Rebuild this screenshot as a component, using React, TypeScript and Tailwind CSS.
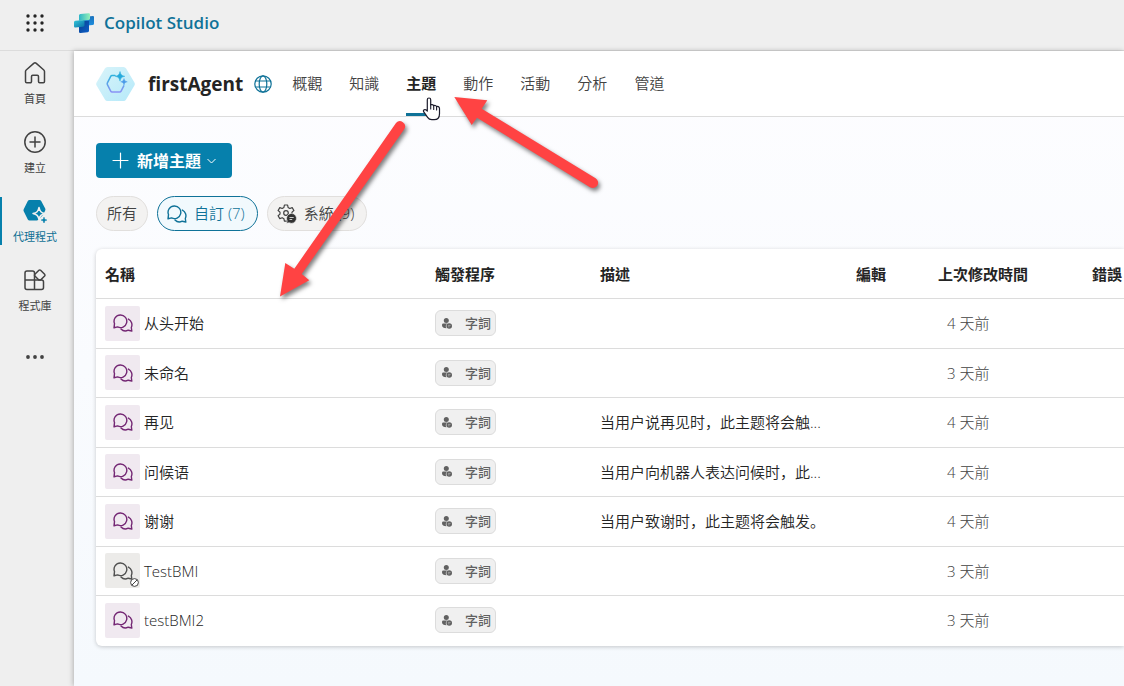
import type { ReactNode } from "react";

type Topic = {
  name: string;
  description?: string;
  modified: string;
  disabled?: boolean;
};

const topics: Topic[] = [
  { name: "从头开始", modified: "4 天前" },
  { name: "未命名", modified: "3 天前" },
  { name: "再见", description: "当用户说再见时，此主题将会触...", modified: "4 天前" },
  { name: "问候语", description: "当用户向机器人表达问候时，此...", modified: "4 天前" },
  { name: "谢谢", description: "当用户致谢时，此主题将会触发。", modified: "4 天前" },
  { name: "TestBMI", modified: "3 天前", disabled: true },
  { name: "testBMI2", modified: "3 天前" },
];

const tabs = ["概觀", "知識", "主題", "動作", "活動", "分析", "管道"];

function WaffleIcon() {
  return (
    <svg width="18" height="18" viewBox="0 0 18 18" fill="#242424">
      {[2, 9, 16].map(y => [2, 9, 16].map(x => <circle key={`${x}-${y}`} cx={x} cy={y} r="1.7" />))}
    </svg>
  );
}

function CopilotStudioLogo() {
  return (
    <svg width="20" height="20" viewBox="0 0 20 20">
      <defs>
        <linearGradient id="logoTop" x1="0" y1="0" x2="1" y2="0">
          <stop offset="0" stopColor="#2cb4c8" />
          <stop offset="1" stopColor="#93f0b8" />
        </linearGradient>
        <linearGradient id="logoRight" x1="0" y1="0" x2="0" y2="1">
          <stop offset="0" stopColor="#1a72bd" />
          <stop offset="1" stopColor="#1d8fe0" />
        </linearGradient>
        <linearGradient id="logoLeft" x1="0" y1="0" x2="1" y2="1">
          <stop offset="0" stopColor="#35c8d8" />
          <stop offset="1" stopColor="#0a6fa8" />
        </linearGradient>
        <linearGradient id="logoBottom" x1="0" y1="0" x2="1" y2="1">
          <stop offset="0" stopColor="#0a3f8f" />
          <stop offset="1" stopColor="#0b5fc8" />
        </linearGradient>
      </defs>
      <path d="M9 4l10-1a1 1 0 0 1 1 1v6.500a1.500 1.500 0 0 1-1.500 1.500L9 13z" fill="url(#logoRight)" />
      <path d="M5 8h10v9.700a1.500 1.500 0 0 1-1.300 1.500l-7.200.800A1.300 1.300 0 0 1 5 18.700z" fill="url(#logoBottom)" />
      <path d="M0 9.200a1.500 1.500 0 0 1 1.400-1.500L10.500 7v5.200a1.500 1.500 0 0 1-1.400 1.500l-7.800.800A1.200 1.200 0 0 1 0 13.300z" fill="url(#logoLeft)" />
      <path d="M5 2.500A1.500 1.500 0 0 1 6.400 1L14.500.200A1.300 1.300 0 0 1 16 1.500v4a1.500 1.500 0 0 1-1.400 1.500L5 7.800z" fill="url(#logoTop)" />
    </svg>
  );
}

function HomeIcon() {
  return (
    <svg width="22" height="22" viewBox="0 0 22 22" fill="none" stroke="#424242" strokeWidth="1.500" strokeLinejoin="round">
      <path d="M1.500 9.500a2 2 0 0 1 .7-1.500l7.500-6.600a2 2 0 0 1 2.600 0L19.800 8a2 2 0 0 1 .7 1.500v10a1.200 1.200 0 0 1-1.200 1.200h-3.600a1.200 1.200 0 0 1-1.200-1.200v-5a1.200 1.200 0 0 0-1.200-1.200H8.700a1.200 1.200 0 0 0-1.200 1.200v5a1.200 1.200 0 0 1-1.200 1.200H2.700a1.200 1.200 0 0 1-1.200-1.200z" />
    </svg>
  );
}

function CreateIcon() {
  return (
    <svg width="22" height="22" viewBox="0 0 22 22" fill="none" stroke="#424242" strokeWidth="1.500" strokeLinecap="round">
      <circle cx="11" cy="11" r="10.200" />
      <path d="M11 6v10M6 11h10" />
    </svg>
  );
}

function AgentIcon() {
  return (
    <svg width="24" height="24" viewBox="0 0 24 24">
      <path d="M6.500 1h10a2 2 0 0 1 1.700 1l4 7.500a2 2 0 0 1 0 1.900L18 20.500a2 2 0 0 1-1.500 1h-10a2 2 0 0 1-1.700-1L.700 12.200a2 2 0 0 1 0-1.900L4.800 2a2 2 0 0 1 1.700-1z" fill="#0680ac" />
      <path d="M14 22l9-9v11h-9z" fill="#efefef" />
      <path d="M16 8.500c.900 4 2.100 5.200 6 6-3.900.900-5.100 2.100-6 6-.900-3.900-2.100-5.100-6-6 3.900-.800 5.100-2 6-6z" fill="#0680ac" stroke="#efefef" strokeWidth="1.500" strokeLinejoin="round" />
      <path d="M21 18.200c.4 1.900 1 2.500 2.900 2.900-1.900.4-2.500 1-2.900 2.900-.4-1.900-1-2.500-2.900-2.900 1.900-.4 2.500-1 2.900-2.900z" fill="#0680ac" stroke="#0680ac" strokeWidth=".6" />
    </svg>
  );
}

function LibraryIcon() {
  return (
    <svg width="22" height="22" viewBox="0 0 22 22" fill="none" stroke="#424242" strokeWidth="1.500" strokeLinejoin="round">
      <path d="M10.500 11V4a2 2 0 0 0-2-2H3a2 2 0 0 0-2 2v14.500a2 2 0 0 0 2 2h14.500a2 2 0 0 0 2-2V13a2 2 0 0 0-2-2zM1 11h9.500v9.500" />
      <path d="M14.900 1.300a1.200 1.200 0 0 1 1.700 0l4 4a1.200 1.200 0 0 1 0 1.700l-4 4h-1.700l-4-4a1.200 1.200 0 0 1 0-1.700z" />
    </svg>
  );
}

function MoreIcon() {
  return (
    <svg width="18" height="4" viewBox="0 0 18 4" fill="#424242">
      <circle cx="2" cy="2" r="1.900" />
      <circle cx="9" cy="2" r="1.900" />
      <circle cx="16" cy="2" r="1.900" />
    </svg>
  );
}

function AgentBadge() {
  return (
    <svg width="40" height="34" viewBox="0 0 40 34">
      <defs>
        <linearGradient id="badge" x1="0" y1="0" x2="1" y2="1">
          <stop offset="0" stopColor="#d9f4fa" />
          <stop offset="1" stopColor="#b5e9f9" />
        </linearGradient>
        <linearGradient id="badgeLine" x1="0" y1="0" x2="0" y2="1">
          <stop offset="0" stopColor="#2fb2dd" />
          <stop offset="1" stopColor="#8b93f5" />
        </linearGradient>
      </defs>
      <path d="M11.500 0h16a3 3 0 0 1 2.600 1.500l8.300 14a3 3 0 0 1 0 3l-8.300 14a3 3 0 0 1-2.600 1.500h-16a3 3 0 0 1-2.600-1.500l-8.300-14a3 3 0 0 1 0-3l8.300-14A3 3 0 0 1 11.500 0z" fill="url(#badge)" />
      <path d="M19 8.500h-3a1.500 1.500 0 0 0-1.300.8l-3.300 6.500a2 2 0 0 0 0 1.800l3.300 6.600a1.500 1.500 0 0 0 1.300.8h7.800a1.500 1.500 0 0 0 1.300-.8l2.700-5.400" fill="none" stroke="url(#badgeLine)" strokeWidth="1.500" strokeLinecap="round" />
      <path d="M24 4.500c.700 3.200 1.600 4.100 4.800 4.800-3.200.700-4.100 1.600-4.800 4.800-.700-3.200-1.600-4.100-4.800-4.800 3.200-.700 4.100-1.600 4.800-4.800z" fill="#26aadc" stroke="#26aadc" strokeWidth=".5" />
      <path d="M28 11.500c.500 2.200 1.100 2.800 3.300 3.300-2.200.500-2.800 1.100-3.300 3.300-.500-2.200-1.100-2.800-3.300-3.300 2.200-.500 2.800-1.100 3.300-3.300z" fill="#4a9ae8" stroke="#4a9ae8" strokeWidth=".4" />
    </svg>
  );
}

function GlobeIcon() {
  return (
    <svg width="18" height="18" viewBox="0 0 18 18" fill="none" stroke="#0f7298" strokeWidth="1.200">
      <circle cx="9" cy="9" r="8.200" />
      <ellipse cx="9" cy="9" rx="3.800" ry="8.200" />
      <path d="M1.500 6h15M1.500 12h15" />
    </svg>
  );
}

function ChatIcon() {
  return (
    <svg width="20" height="18" viewBox="0 0 20 18" fill="none" stroke="currentColor" strokeWidth="1.400" strokeLinejoin="round" strokeLinecap="round">
      <path d="M7.500 1a6.300 6.300 0 1 1-2.900 11.900L1 13.800l.5-4.200A6.300 6.300 0 0 1 7.500 1z" />
      <path d="M8 15a6 6 0 0 0 7.200 1.200l3.600.8-.5-3.500a6.300 6.300 0 0 0-2.900-8.400" />
    </svg>
  );
}

function GearChatIcon() {
  return (
    <svg width="20" height="20" viewBox="0 0 20 20" fill="none">
      <path d="M7.400 1h3.200l.5 2.500 1.700 1 2.400-.9 1.700 2.900-1.900 1.600v2l1.900 1.600-1.700 2.900-2.400-.9-1.700 1-.5 2.500H7.400l-.5-2.500-1.700-1-2.400.9-1.700-2.900L3 10.100v-2L1.100 6.500l1.700-2.900 2.400.9 1.700-1z" stroke="#424242" strokeWidth="1.200" strokeLinejoin="round" />
      <circle cx="9" cy="9" r="2.300" stroke="#424242" strokeWidth="1.200" />
      <path d="M14.500 9.500a4.900 4.900 0 1 1-2.300 9.200l-2.600.6.600-2.500a4.900 4.900 0 0 1 4.300-7.300z" fill="#323232" stroke="#f3f2f1" strokeWidth=".6" />
      <path d="M12.500 13.500h4.200M12.500 15.500h2.700" stroke="#f3f2f1" strokeWidth=".8" />
    </svg>
  );
}

function PhraseIcon() {
  return (
    <svg width="10" height="11" viewBox="0 0 10 11" fill="#616161">
      <circle cx="4.300" cy="2.500" r="2.500" />
      <path d="M1.300 5.500h4.500A3 3 0 0 0 4.500 10.300C1.500 10.300 0 9 0 7.200c0-1 .5-1.700 1.300-1.700z" />
      <circle cx="7.200" cy="8" r="2.800" />
      <path d="M6 7.400h2.600M6 8.800h1.600" stroke="#efefef" strokeWidth=".4" />
    </svg>
  );
}

function BlockedIcon() {
  return (
    <svg width="9" height="9" viewBox="0 0 9 9" fill="#fff" stroke="#424242" strokeWidth="1" className="absolute right-px bottom-px">
      <circle cx="4.500" cy="4.500" r="3.900" />
      <path d="M2 7l5-5" />
    </svg>
  );
}

function NavItem({ icon, label, active }: { icon: ReactNode; label: string; active?: boolean }) {
  return (
    <a
      href="#"
      className={`flex h-12 w-full flex-col items-center justify-between border-l-2 pr-1.5 text-[11px] leading-4 ${
        active ? "border-[#0680ac] text-[#0f6f94]" : "border-transparent text-[#424242]"
      }`}
    >
      <span className="flex h-7 items-center">{icon}</span>
      {label}
    </a>
  );
}

function TopicRow({ topic }: { topic: Topic }) {
  return (
    <tr className="h-[50px] border-b border-[#dcdcdc] last:border-b-0 even:h-[49px]">
      <td className="px-2 py-0">
        <div className="flex items-center gap-1">
          <span
            className={`relative ml-px flex h-[35px] w-[35px] items-center justify-center rounded-xs ${
              topic.disabled ? "bg-[#ecebe9] text-[#505050]" : "bg-[#f0e9f0] text-[#742774]"
            }`}
          >
            <ChatIcon />
            {topic.disabled && <BlockedIcon />}
          </span>
          <a href="#" className="font-[350]">{topic.name}</a>
        </div>
      </td>
      <td className="px-2 py-0">
        <span className="ml-px inline-flex h-[26px] w-[61px] items-center justify-between rounded-md border border-[#dcdcdc] bg-[#f0f0f0] pr-1 pl-1.5 align-middle text-[13px] font-medium text-[#616161]">
          <PhraseIcon />
          字詞
        </span>
      </td>
      <td className="truncate px-[9px] py-0 font-[Open_Sans,Noto_Sans_CJK_SC,sans-serif] font-[350]">{topic.description}</td>
      <td />
      <td className="px-[18px] py-0 font-light text-[#424242]">{topic.modified}</td>
      <td />
    </tr>
  );
}

function Annotations() {
  return (
    <svg width="620" height="320" viewBox="0 0 620 320" className="pointer-events-none absolute top-0 left-0">
      <path
        d="M429 98c1 0 1.700.8 1.700 1.800v5.200c.5-.7 2.600-.6 3 .7.800-.6 2.500-.3 2.800 1 1-.6 3-.2 3 1.700v5.300c0 3.600-2.200 6-5.400 6h-2.300c-2 0-3.200-.8-4.200-2.300l-4-5.700c-.7-1.200.6-2.800 2.200-1.900l1.500 1.300v-11.300c0-1 .7-1.800 1.700-1.800z"
        fill="#fff"
        stroke="#1b1b2b"
        strokeWidth="1.200"
        strokeLinejoin="round"
      />
      <path d="M430.700 104.500v4.500M433.700 105.500v4M436.600 106.500v3.500" stroke="#1b1b2b" strokeWidth="1.100" strokeLinecap="round" />
      <g fill="#ff4343" className="drop-shadow-[2px_3px_2px_rgba(0,0,0,0.5)]">
        <path d="M280 296.500L285.300 263l9 5.700L396 123a5.200 5.200 0 0 1 8.400 6L301.700 274l7.600 6.300z" />
        <path d="M454.300 97l33 3.300-5.600 8.400L595.600 178.200a5.200 5.200 0 0 1-5.600 9L477 117.700l-5.300 7.300z" />
      </g>
    </svg>
  );
}

export default function App() {
  return (
    <div className="relative flex min-h-screen flex-col overflow-hidden bg-[#efefef] font-[Open_Sans,Noto_Sans_CJK_TC,sans-serif] text-[15px] leading-5 text-[#242424]">
      <header className="flex h-[51px] items-center border-b border-[#dcdcdc] pb-1 pl-[26px]">
        <button type="button" aria-label="Apps" className="mr-[30px]">
          <WaffleIcon />
        </button>
        <CopilotStudioLogo />
        <a href="#" className="ml-2.5 text-[17px] font-semibold text-[#0f7298]">Copilot Studio</a>
      </header>

      <div className="flex flex-1">
        <nav className="flex w-[74px] shrink-0 flex-col items-center gap-[21px] pt-2">
          <NavItem icon={<HomeIcon />} label="首頁" />
          <NavItem icon={<CreateIcon />} label="建立" />
          <NavItem icon={<AgentIcon />} label="代理程式" active />
          <NavItem icon={<LibraryIcon />} label="程式庫" />
          <button type="button" aria-label="More" className="mt-5 mr-1">
            <MoreIcon />
          </button>
        </nav>

        <main className="min-w-0 flex-1 bg-linear-to-b from-[#fdfdff] to-[#f5f9fd] shadow-[-1px_0_5px_rgba(0,0,0,0.25)]">
          <div className="flex h-[66px] items-center border-b border-[#dcdcdc] bg-white pl-[22px]">
            <AgentBadge />
            <h1 className="ml-3 text-[19px] font-bold">firstAgent</h1>
            <button type="button" aria-label="Language" className="mr-5 ml-[11px]">
              <GlobeIcon />
            </button>
            <div className="flex h-full gap-[27px]">
              {tabs.map(tab => (
                <a
                  key={tab}
                  href="#"
                  className={`flex h-full items-center border-b-3 pt-0.5 ${
                    tab === "主題" ? "border-b-[#0f7298] font-bold" : "border-b-transparent font-[350] text-[#424242]"
                  }`}
                >
                  {tab}
                </a>
              ))}
            </div>
          </div>

          <div className="py-[26px] pl-[22px]">
            <button type="button" className="flex h-[35px] items-center rounded-sm bg-[#0680ac] px-4 text-base leading-5 font-bold text-white">
              <svg width="17" height="17" viewBox="0 0 17 17" stroke="#fff" strokeWidth="1.200" strokeLinecap="round" className="mr-2">
                <path d="M8.500 1v15M1 8.500h15" />
              </svg>
              新增主題
              <svg width="9" height="6" viewBox="0 0 9 6" fill="none" stroke="#fff" className="ml-1.5">
                <path d="M.500 1l4 4 4-4" />
              </svg>
            </button>

            <div className="mt-[18px] flex gap-[9px] font-[350]">
              <button type="button" className="h-[35px] rounded-full border border-[#e1dfdd] bg-[#f3f2f1] px-2.5 pb-0.5 text-[#424242]">
                所有
              </button>
              <button type="button" className="flex h-[35px] items-center gap-[7px] rounded-full border border-[#0f7298] bg-[#f1f9fd] pr-3 pl-[9px] text-[#0f7298]">
                <ChatIcon />
                <span className="pb-0.5">自訂 (7)</span>
              </button>
              <button type="button" className="flex h-[35px] items-center gap-[7px] rounded-full border border-[#e1dfdd] bg-[#f3f2f1] pr-3 pl-[9px] text-[#424242]">
                <GearChatIcon />
                <span className="pb-0.5">系統 (9)</span>
              </button>
            </div>

            <div className="mt-[18px] overflow-hidden rounded-l-md bg-white pb-px shadow-[0_1px_4px_rgba(0,0,0,0.2)]">
              <table className="w-full table-fixed border-collapse text-left whitespace-nowrap">
                <thead>
                  <tr className="h-[49px] border-b border-[#dcdcdc]">
                    <th className="w-[330px] px-[9px] pt-0.5 font-bold">名稱</th>
                    <th className="w-[165px] px-[9px] pt-0.5 font-bold">觸發程序</th>
                    <th className="w-[256px] px-[9px] pt-0.5 font-bold">描述</th>
                    <th className="w-[82px] px-[9px] pt-0.5 font-bold">編輯</th>
                    <th className="w-[154px] px-[9px] pt-0.5 font-bold">上次修改時間</th>
                    <th className="pt-0.5 pl-[9px] font-bold">錯誤</th>
                  </tr>
                </thead>
                <tbody>
                  {topics.map(topic => (
                    <TopicRow key={topic.name} topic={topic} />
                  ))}
                </tbody>
              </table>
            </div>
          </div>
        </main>
      </div>

      <Annotations />
    </div>
  );
}
